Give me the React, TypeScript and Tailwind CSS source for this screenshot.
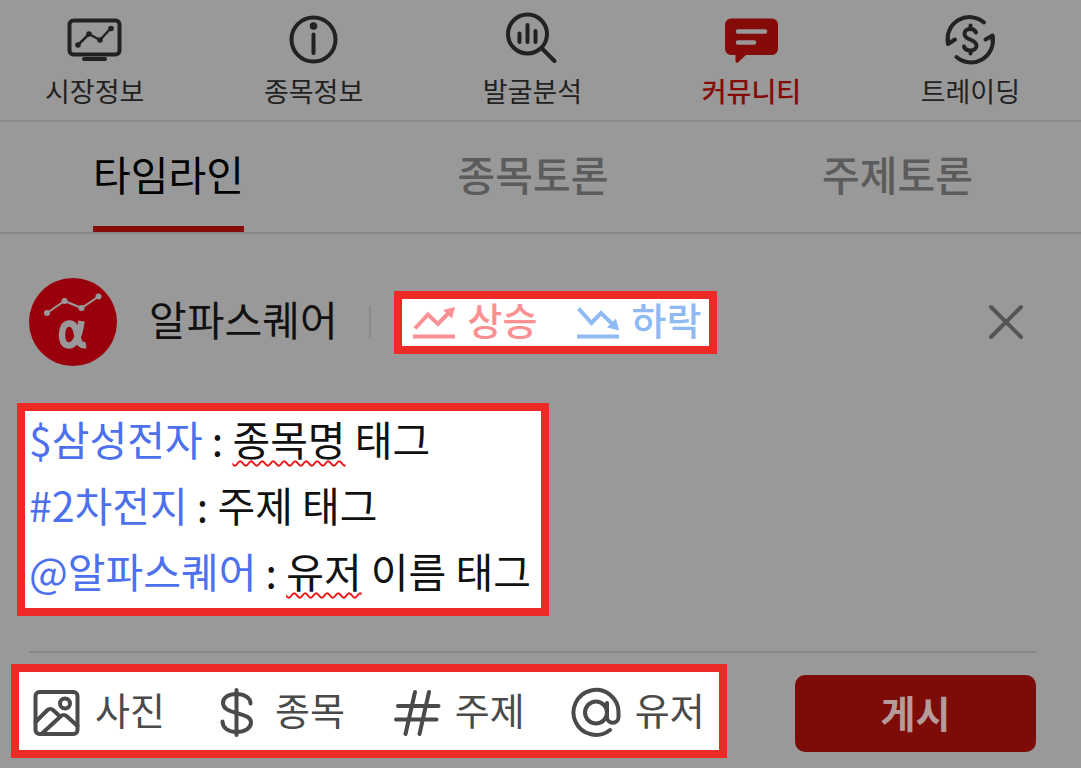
import React from 'react';

const iconLine = {
  fill: 'none',
  stroke: 'currentColor',
  strokeLinecap: 'round' as const,
  strokeLinejoin: 'round' as const,
};

function MarketIcon() {
  return (
    <svg width="56" height="56" viewBox="0 0 56 56" strokeWidth="4" {...iconLine} aria-hidden="true">
      <rect x="2.500" y="8.500" width="50" height="34" rx="4" />
      <path d="M17 47h21" />
      <path d="M11 33l11-11 11 6 11-12" strokeWidth="2.500" />
      <g fill="currentColor" stroke="none">
        <circle cx="11" cy="33" r="2.800" />
        <circle cx="22" cy="22" r="2.800" />
        <circle cx="33" cy="28" r="2.800" />
        <circle cx="44" cy="16.500" r="2.800" />
      </g>
    </svg>
  );
}

function InfoIcon() {
  return (
    <svg width="56" height="56" viewBox="0 0 56 56" strokeWidth="4" {...iconLine} aria-hidden="true">
      <circle cx="27.500" cy="27.500" r="22" />
      <path d="M27.500 22.500v18.500" />
      <circle cx="27.500" cy="14" r="3.800" fill="currentColor" stroke="none" />
    </svg>
  );
}

function AnalysisIcon() {
  return (
    <svg width="56" height="56" viewBox="0 0 56 56" strokeWidth="4" {...iconLine} aria-hidden="true">
      <circle cx="22.500" cy="22" r="19.500" />
      <path d="M14.500 21.500v8.500M22.500 13v17M30.500 19v11" />
      <path d="M37.500 37l12 12" />
    </svg>
  );
}

function CommunityIcon() {
  return (
    <svg width="56" height="56" viewBox="0 0 56 56" aria-hidden="true">
      <path
        d="M8 6.500h41a6 6 0 0 1 6 6v24.500a6 6 0 0 1-6 6H23l-8 7.500a1.600 1.600 0 0 1-2.500-1.500v-6H8a6 6 0 0 1-6-6v-24.500a6 6 0 0 1 6-6z"
        fill="currentColor"
      />
      <path d="M15 19.500h27M15 30.500h16" stroke="#999" strokeWidth="4.500" strokeLinecap="round" />
    </svg>
  );
}

function TradingIcon() {
  return (
    <svg width="56" height="56" viewBox="0 0 56 56" strokeWidth="4" {...iconLine} aria-hidden="true">
      <path d="M42 10.500A22 22 0 0 0 6 31.500" />
      <path d="M6 26v6L13 27.500" />
      <path d="M14.500 45A22 22 0 0 0 50.500 24" />
      <path d="M50.500 29v-5.500L43.500 27.500" />
      <path d="M34 20.500c-1-3-4-3.500-6-3.500-3.500 0-5.500 2.300-5.500 5 0 6.500 12 5 12 11.500 0 3-2.500 5-6 5-3 0-5.500-1-6.500-4M28.500 13.500V17M28.500 38.500V41.500" />
    </svg>
  );
}

function AlphaLogo() {
  return (
    <svg width="88" height="88" viewBox="0 0 88 88" className="shrink-0" aria-label="알파스퀘어" role="img">
      <circle cx="44" cy="44" r="44" fill="#99000c" />
      <g fill="#999" stroke="none">
        <circle cx="18" cy="35" r="3" />
        <circle cx="35.500" cy="23" r="3" />
        <circle cx="52.500" cy="30" r="3" />
        <circle cx="69.500" cy="18.500" r="3" />
      </g>
      <path d="M18 35l17.500-12 17 7 17-11.500" fill="none" stroke="#999" strokeWidth="2" />
      <path
        d="M52.500 43C50.500 58 46 67.500 39.500 67.500c-4.500 0-6.500-4.500-6.500-10.500C33 50 35.500 45.500 40.500 45.500c5.500 0 7 6 8 13 1 6.500 3 9.500 8.500 8.500"
        fill="none"
        stroke="#999"
        strokeWidth="6.500"
      />
    </svg>
  );
}

function RiseIcon() {
  return (
    <svg width="44" height="36" viewBox="0 0 44 36" fill="none" stroke="currentColor" strokeWidth="4" aria-hidden="true">
      <path d="M1 32.500h42" />
      <path d="M3 24.500L16 10.500l10 9.500L38 7.500" />
      <path d="M43 3L31 6l9 8.500z" fill="currentColor" stroke="none" />
    </svg>
  );
}

function FallIcon() {
  return (
    <svg width="44" height="36" viewBox="0 0 44 36" fill="none" stroke="currentColor" strokeWidth="4" aria-hidden="true">
      <path d="M1 32.500h42" />
      <path d="M2.500 4.500L15.500 19 25 9 38 21.500" />
      <path d="M43 26.500L40 14.500l-9 9z" fill="currentColor" stroke="none" />
    </svg>
  );
}

function PhotoIcon() {
  return (
    <svg width="50" height="52" viewBox="0 0 50 52" strokeWidth="4" {...iconLine} aria-hidden="true">
      <rect x="4.500" y="7" width="42" height="42" rx="4" />
      <circle cx="34" cy="18.500" r="5" />
      <path d="M4.500 37l12-12a4 4 0 0 1 5.500 0l5.500 5M11 48.500L30 31a4 4 0 0 1 5.500 0L46.500 41" />
    </svg>
  );
}

function DollarIcon() {
  return (
    <svg width="50" height="52" viewBox="0 0 50 52" strokeWidth="4" {...iconLine} aria-hidden="true">
      <path d="M25.500 5v45" />
      <path d="M39.500 18.500c0-5.500-6-9.500-14-9.500S12 12.500 12 18 17 25.500 25.500 28 40 32 40 37.500s-6 9.500-14.500 9.500S11.500 42.500 11.500 36.500" />
    </svg>
  );
}

function HashIcon() {
  return (
    <svg width="50" height="52" viewBox="0 0 50 52" strokeWidth="4" {...iconLine} aria-hidden="true">
      <path d="M24 7L14.500 49M38 7L28.500 49M7 21h40.500M5 34.500h40.500" />
    </svg>
  );
}

function AtIcon() {
  return (
    <svg width="50" height="52" viewBox="0 0 50 52" strokeWidth="4" {...iconLine} aria-hidden="true">
      <circle cx="25" cy="27.500" r="11" />
      <path d="M36 18v14a5.500 5.500 0 0 0 11.500 0V27.500A22.500 22.500 0 1 0 39 45" />
    </svg>
  );
}

const menus = [
  { label: '시장정보', Icon: MarketIcon, active: false },
  { label: '종목정보', Icon: InfoIcon, active: false },
  { label: '발굴분석', Icon: AnalysisIcon, active: false },
  { label: '커뮤니티', Icon: CommunityIcon, active: true },
  { label: '트레이딩', Icon: TradingIcon, active: false },
];

const tabs = ['타임라인', '종목토론', '주제토론'];

const tools = [
  { label: '사진', Icon: PhotoIcon },
  { label: '종목', Icon: DollarIcon },
  { label: '주제', Icon: HashIcon },
  { label: '유저', Icon: AtIcon },
];

export default function App() {
  return (
    <div className="min-h-screen bg-[#999] font-['Noto_Sans_CJK_KR',sans-serif] text-[#111]">
      <nav className="flex justify-between border-b-2 border-[#898989] pt-3 pr-[61px] pb-[11px] pl-[45px]">
        {menus.map(({ label, Icon, active }) => (
          <a
            key={label}
            href="#"
            className={`flex flex-col items-center gap-[5px] text-[27px] leading-9 ${
              active ? 'font-medium text-[#850b09]' : 'text-[#222]'
            }`}
          >
            <Icon />
            {label}
          </a>
        ))}
      </nav>

      <div role="tablist" className="flex h-28 justify-between border-b-2 border-[#878787] pr-[108px] pl-[93px]">
        {tabs.map((tab, i) => (
          <button
            key={tab}
            role="tab"
            aria-selected={i === 0}
            className={`border-b-6 pb-0.5 text-[41px] leading-[102px] ${
              i === 0 ? 'border-[#850b09] text-black' : 'border-transparent font-medium text-[#5c5c5c]'
            }`}
          >
            {tab}
          </button>
        ))}
      </div>

      <main className="pt-11 pr-[45px] pb-[10px] pl-[29px]">
        <div className="flex items-center">
          <AlphaLogo />
          <span className="ml-8 pb-2 text-[41px] leading-[60px]">알파스퀘어</span>
          <span className="ml-[31px] h-8 w-0.5 bg-[#8a8a8a]" />
          <div className="ml-[23px] flex gap-[38px] border-8 border-[#ec2b27] bg-white pr-2 pl-[10px] text-[38px] leading-[39px] font-medium">
            <button className="flex items-center gap-3 text-[#fa9091]">
              <RiseIcon />
              <span className="pb-2">상승</span>
            </button>
            <button className="flex items-center gap-3 text-[#8fbaf4]">
              <FallIcon />
              <span className="pb-2">하락</span>
            </button>
          </div>
          <button aria-label="닫기" className="mr-3 ml-auto text-[#555]">
            <svg width="36" height="36" viewBox="0 0 36 36" strokeWidth="4" {...iconLine} aria-hidden="true">
              <path d="M3 3l30 30M33 3L3 33" />
            </svg>
          </button>
        </div>

        <div
          role="textbox"
          aria-label="글 내용"
          aria-multiline="true"
          className="mt-[37px] -ml-3 flex w-fit flex-col gap-3 border-8 border-[#ec2b27] bg-white pr-[10px] pb-[11px] pl-1 text-[41px] leading-[54px]"
        >
          <p>
            <a href="#" className="text-[#4c70ee]">$삼성전자</a> :{' '}
            <span className="underline decoration-[#f01414] decoration-wavy decoration-2 underline-offset-4">종목명</span> 태그
          </p>
          <p>
            <a href="#" className="text-[#4c70ee]">#2차전지</a> : 주제 태그
          </p>
          <p>
            <a href="#" className="text-[#4c70ee]">@알파스퀘어</a> :{' '}
            <span className="underline decoration-[#f01414] decoration-wavy decoration-2 underline-offset-4">유저</span> 이름 태그
          </p>
        </div>

        <hr className="mt-[35px] border-t-2 border-[#878787]" />

        <div className="mt-[11px] flex items-center justify-between">
          <div className="-ml-[18px] flex gap-[46px] border-8 border-[#ec2b27] bg-white pr-[14px] pl-3 text-[38px] leading-[74px] text-[#4a4a4a]">
            {tools.map(({ label, Icon }) => (
              <button key={label} className="flex items-center gap-[14px]">
                <Icon />
                <span className="pb-1">{label}</span>
              </button>
            ))}
          </div>
          <button className="mt-1 h-[77px] w-[241px] rounded-[10px] bg-[#7d0c09] pb-1 text-[38px] font-bold text-[#b59c9b]">
            게시
          </button>
        </div>
      </main>
    </div>
  );
}
